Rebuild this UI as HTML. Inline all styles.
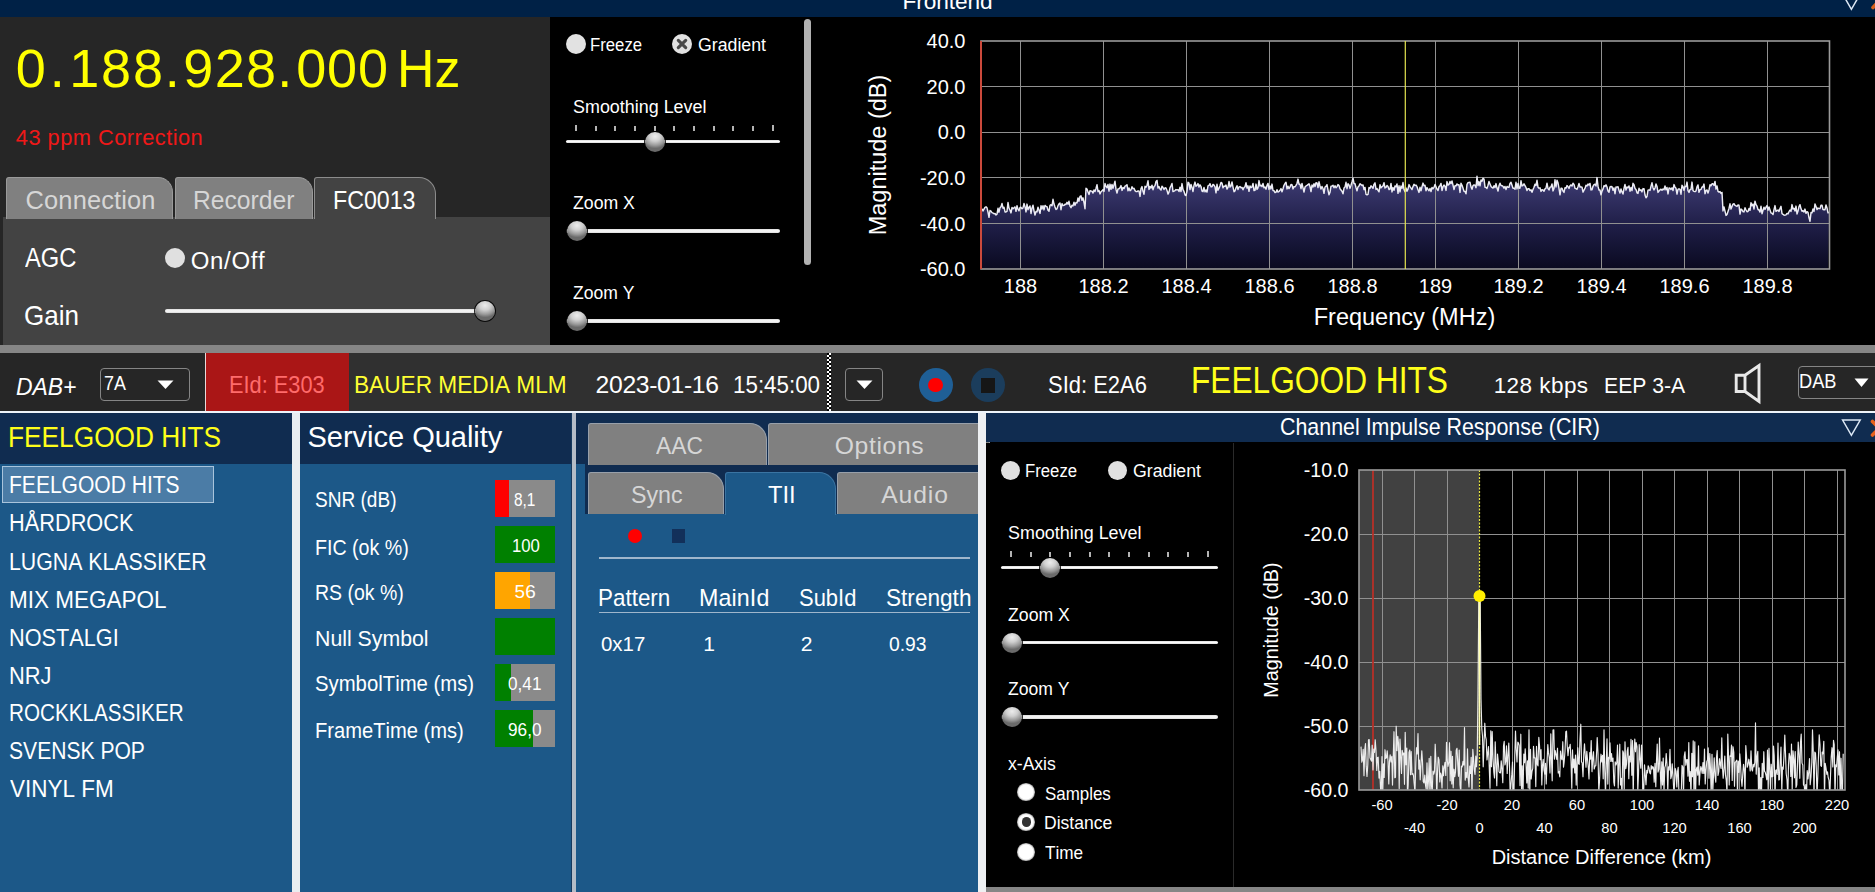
<!DOCTYPE html>
<html lang="en"><head><meta charset="utf-8"><title>QIRX</title>
<style>
html,body{margin:0;padding:0;background:#000;}
body{width:1875px;height:892px;position:relative;overflow:hidden;font-family:"Liberation Sans", sans-serif;}
.b{position:absolute;display:block}
.t{position:absolute;white-space:pre;font-kerning:none;font-family:"Liberation Sans", sans-serif;}
</style></head><body>
<div class="b" style="left:0px;top:0px;width:1875px;height:17px;background:#002146;"></div>
<div class="t" style="left:902.49px;top:-12.46px;font-size:22.67px;line-height:27px;letter-spacing:-0.090px;color:#fff;">Frontend</div>
<div class="b" style="left:0px;top:17px;width:550px;height:328px;background:#262626;"></div>
<div class="t" style="left:15.74px;top:36.18px;font-size:54.00px;line-height:65px;letter-spacing:4.005px;color:#ffff00;">0.</div>
<div class="t" style="left:69.24px;top:36.18px;font-size:54.00px;line-height:65px;letter-spacing:1.815px;color:#ffff00;">188.</div>
<div class="t" style="left:183.32px;top:36.18px;font-size:54.00px;line-height:65px;letter-spacing:1.287px;color:#ffff00;">928.</div>
<div class="t" style="left:296.24px;top:36.18px;font-size:54.00px;line-height:65px;letter-spacing:0.811px;color:#ffff00;">000</div>
<div class="t" style="left:396.60px;top:36.18px;font-size:54.00px;line-height:65px;letter-spacing:0.000px;color:#ffff00;transform:scaleX(0.9596);transform-origin:0 0;">Hz</div>
<div class="t" style="left:15.85px;top:124.84px;font-size:21.80px;line-height:26px;letter-spacing:0.473px;color:#f01818;">43 ppm Correction</div>
<div class="b" style="left:3px;top:217px;width:547px;height:128px;background:#434343;"></div>
<div class="b" style="left:6px;top:177px;width:166.5px;height:42px;background:#808080;border:1px solid #9a9a9a;border-bottom:none;border-radius:3px 15px 0 0;box-sizing:border-box"></div>
<div class="b" style="left:174.5px;top:177px;width:138px;height:42px;background:#808080;border:1px solid #9a9a9a;border-bottom:none;border-radius:3px 15px 0 0;box-sizing:border-box"></div>
<div class="b" style="left:314px;top:177px;width:122px;height:42px;background:#434343;border:1px solid #8c8c8c;border-bottom:none;border-radius:3px 17px 0 0;box-sizing:border-box"></div>
<div class="t" style="left:25.56px;top:184.58px;font-size:25.44px;line-height:31px;letter-spacing:0.140px;color:#d6d6d6;">Connection</div>
<div class="t" style="left:192.83px;top:184.58px;font-size:25.44px;line-height:31px;letter-spacing:0.000px;color:#d6d6d6;transform:scaleX(0.9696);transform-origin:0 0;">Recorder</div>
<div class="t" style="left:333.35px;top:184.78px;font-size:25.44px;line-height:31px;letter-spacing:0.000px;color:#fff;transform:scaleX(0.9119);transform-origin:0 0;">FC0013</div>
<div class="t" style="left:24.80px;top:241.33px;font-size:27.62px;line-height:33px;letter-spacing:0.000px;color:#fff;transform:scaleX(0.8597);transform-origin:0 0;">AGC</div>
<div class="t" style="left:23.54px;top:300.08px;font-size:26.89px;line-height:32px;letter-spacing:0.000px;color:#fff;transform:scaleX(0.9683);transform-origin:0 0;">Gain</div>
<div class="b" style="left:165px;top:247.5px;width:20px;height:20px;border-radius:50%;background:#e0e0e0;"></div>
<div class="t" style="left:190.71px;top:246.09px;font-size:23.98px;line-height:29px;letter-spacing:0.693px;color:#fff;">On/Off</div>
<div class="b" style="left:165px;top:309.45px;width:317px;height:3.1px;background:linear-gradient(180deg,#dcdcdc,#fafafa 50%,#dcdcdc);border-radius:2px;"></div>
<div class="b" style="left:474.5px;top:301.4px;width:20px;height:20px;border-radius:50%;background:radial-gradient(ellipse 70% 60% at 50% 22%, #ececec 0%, #cfcfcf 40%, #9a9a9a 75%, #6a6a6a 100%);box-shadow:0 0 0 1px rgba(0,0,0,.85);"></div>
<div class="b" style="left:566px;top:33.9px;width:20px;height:20px;border-radius:50%;background:#e2e2e2;"></div>
<div class="t" style="left:590.48px;top:33.35px;font-size:18.90px;line-height:23px;letter-spacing:0.000px;color:#fff;transform:scaleX(0.8862);transform-origin:0 0;">Freeze</div>
<div class="b" style="left:672.1px;top:33.9px;width:20px;height:20px;border-radius:50%;background:#e2e2e2;"></div>
<svg class="b" style="left:672.1px;top:33.9px" width="20" height="20" viewBox="0 0 20 20"><path d="M6.3 6.3 L13.7 13.7 M13.7 6.3 L6.3 13.7" stroke="#4a4a4a" stroke-width="3.1" stroke-linecap="round" fill="none"/></svg>
<div class="t" style="left:697.96px;top:33.35px;font-size:18.90px;line-height:23px;letter-spacing:0.000px;color:#fff;transform:scaleX(0.9386);transform-origin:0 0;">Gradient</div>
<div class="t" style="left:573.04px;top:95.35px;font-size:18.90px;line-height:23px;letter-spacing:0.000px;color:#fff;transform:scaleX(0.9485);transform-origin:0 0;">Smoothing Level</div>
<div class="b" style="left:575.05px;top:125px;width:1.9px;height:6px;background:#b4b4b4;"></div>
<div class="b" style="left:594.73px;top:126px;width:1.9px;height:5px;background:#b4b4b4;"></div>
<div class="b" style="left:614.41px;top:126px;width:1.9px;height:5px;background:#b4b4b4;"></div>
<div class="b" style="left:634.09px;top:126px;width:1.9px;height:5px;background:#b4b4b4;"></div>
<div class="b" style="left:653.77px;top:126px;width:1.9px;height:5px;background:#b4b4b4;"></div>
<div class="b" style="left:673.45px;top:126px;width:1.9px;height:5px;background:#b4b4b4;"></div>
<div class="b" style="left:693.13px;top:126px;width:1.9px;height:5px;background:#b4b4b4;"></div>
<div class="b" style="left:712.81px;top:126px;width:1.9px;height:5px;background:#b4b4b4;"></div>
<div class="b" style="left:732.49px;top:126px;width:1.9px;height:5px;background:#b4b4b4;"></div>
<div class="b" style="left:752.17px;top:126px;width:1.9px;height:5px;background:#b4b4b4;"></div>
<div class="b" style="left:771.85px;top:125px;width:1.9px;height:6px;background:#b4b4b4;"></div>
<div class="b" style="left:566px;top:139.95px;width:213.5px;height:3.1px;background:linear-gradient(180deg,#dcdcdc,#fafafa 50%,#dcdcdc);border-radius:2px;"></div>
<div class="b" style="left:644.6px;top:131.9px;width:20px;height:20px;border-radius:50%;background:radial-gradient(ellipse 70% 60% at 50% 22%, #ececec 0%, #cfcfcf 40%, #9a9a9a 75%, #6a6a6a 100%);box-shadow:0 0 0 1px rgba(0,0,0,.85);"></div>
<div class="t" style="left:573.29px;top:191.35px;font-size:18.90px;line-height:23px;letter-spacing:0.000px;color:#fff;transform:scaleX(0.9362);transform-origin:0 0;">Zoom X</div>
<div class="b" style="left:566px;top:229.45px;width:213.5px;height:3.1px;background:linear-gradient(180deg,#dcdcdc,#fafafa 50%,#dcdcdc);border-radius:2px;"></div>
<div class="b" style="left:566.5px;top:221.4px;width:20px;height:20px;border-radius:50%;background:radial-gradient(ellipse 70% 60% at 50% 22%, #ececec 0%, #cfcfcf 40%, #9a9a9a 75%, #6a6a6a 100%);box-shadow:0 0 0 1px rgba(0,0,0,.85);"></div>
<div class="t" style="left:573.29px;top:281.35px;font-size:18.90px;line-height:23px;letter-spacing:0.000px;color:#fff;transform:scaleX(0.9288);transform-origin:0 0;">Zoom Y</div>
<div class="b" style="left:566px;top:319.45px;width:213.5px;height:3.1px;background:linear-gradient(180deg,#dcdcdc,#fafafa 50%,#dcdcdc);border-radius:2px;"></div>
<div class="b" style="left:566.5px;top:311.4px;width:20px;height:20px;border-radius:50%;background:radial-gradient(ellipse 70% 60% at 50% 22%, #ececec 0%, #cfcfcf 40%, #9a9a9a 75%, #6a6a6a 100%);box-shadow:0 0 0 1px rgba(0,0,0,.85);"></div>
<div class="b" style="left:804px;top:19px;width:7px;height:246px;background:#b2b2b2;border-radius:4px;"></div>
<div class="b" style="left:0px;top:345px;width:1875px;height:7.5px;background:#868686;"></div>
<div class="b" style="left:0px;top:352.5px;width:1875px;height:59px;background:#262626;"></div>
<div class="b" style="left:206px;top:352.5px;width:143px;height:59px;background:#aa1616;"></div>
<div class="b" style="left:205px;top:352.5px;width:1px;height:59px;background:#e8d8d8;"></div>
<div class="b" style="left:349px;top:352.5px;width:478.3px;height:59px;background:#303030;"></div>
<div class="b" style="left:827.3px;top:352.5px;width:4px;height:59px;background:repeating-conic-gradient(#fff 0% 25%, #000 0% 50%) 0 0/4px 4px"></div>
<div class="b" style="left:0px;top:411px;width:1875px;height:2px;background:#eef4fa;"></div>
<div class="t" style="left:15.75px;top:372.59px;font-size:23.69px;line-height:28px;letter-spacing:0.000px;color:#fff;font-style:italic;transform:scaleX(0.9672);transform-origin:0 0;">DAB+</div>
<div class="b" style="left:100px;top:368px;width:90px;height:33px;border:1px solid #858585;border-radius:4px;box-sizing:border-box"></div>
<div class="t" style="left:103.93px;top:371.35px;font-size:20.35px;line-height:24px;letter-spacing:0.000px;color:#fff;transform:scaleX(0.8821);transform-origin:0 0;">7A</div>
<svg class="b" style="left:157px;top:379.5px" width="17" height="10" viewBox="0 0 17 10"><path d="M0.5 0.5 H16.5 L8.5 9 Z" fill="#fff"/></svg>
<div class="t" style="left:229.06px;top:369.83px;font-size:24.71px;line-height:30px;letter-spacing:0.000px;color:#ff6b6b;transform:scaleX(0.8822);transform-origin:0 0;">EId: E303</div>
<div class="t" style="left:353.99px;top:369.83px;font-size:24.71px;line-height:30px;letter-spacing:0.000px;color:#ffff33;transform:scaleX(0.9168);transform-origin:0 0;">BAUER MEDIA MLM</div>
<div class="t" style="left:595.61px;top:369.83px;font-size:24.71px;line-height:30px;letter-spacing:-0.341px;color:#fff;">2023-01-16</div>
<div class="t" style="left:733.15px;top:369.83px;font-size:24.71px;line-height:30px;letter-spacing:0.000px;color:#fff;transform:scaleX(0.9053);transform-origin:0 0;">15:45:00</div>
<div class="b" style="left:845px;top:368px;width:38px;height:33px;border:1px solid #858585;border-radius:4px;box-sizing:border-box"></div>
<svg class="b" style="left:855.5px;top:379.5px" width="17" height="10" viewBox="0 0 17 10"><path d="M0.5 0.5 H16.5 L8.5 9 Z" fill="#fff"/></svg>
<div class="b" style="left:918.5px;top:368px;width:34px;height:34px;border-radius:50%;background:#1f5f96;"></div>
<div class="b" style="left:928.25px;top:377.75px;width:14.5px;height:14.5px;border-radius:50%;background:#ff0000;"></div>
<div class="b" style="left:971px;top:368px;width:34px;height:34px;border-radius:50%;background:#1b3d5c;"></div>
<div class="b" style="left:981px;top:377.5px;width:14px;height:15px;background:#161616;"></div>
<div class="t" style="left:1047.85px;top:371.34px;font-size:23.26px;line-height:28px;letter-spacing:0.000px;color:#fff;transform:scaleX(0.9450);transform-origin:0 0;">SId: E2A6</div>
<div class="t" style="left:1191.25px;top:357.80px;font-size:37.79px;line-height:45px;letter-spacing:0.000px;color:#ffff1a;transform:scaleX(0.8385);transform-origin:0 0;">FEELGOOD HITS</div>
<div class="t" style="left:1493.63px;top:372.09px;font-size:22.53px;line-height:27px;letter-spacing:0.442px;color:#fff;">128 kbps</div>
<div class="t" style="left:1603.61px;top:372.09px;font-size:22.53px;line-height:27px;letter-spacing:0.000px;color:#fff;transform:scaleX(0.9407);transform-origin:0 0;">EEP 3-A</div>
<svg class="b" style="left:1730px;top:360px" width="36" height="48" viewBox="1730 360 36 48"><path d="M1736.2 375.2 H1745 L1759 365.5 V401.5 L1745 391.5 H1736.2 Z M1745 375.2 V391.5" stroke="#e8e8e8" stroke-width="2.9" fill="none" stroke-linejoin="miter"/></svg>
<div class="b" style="left:1797.5px;top:366px;width:90px;height:33px;border:1px solid #858585;border-radius:4px;box-sizing:border-box"></div>
<div class="t" style="left:1799.36px;top:369.10px;font-size:19.62px;line-height:24px;letter-spacing:0.000px;color:#fff;transform:scaleX(0.9283);transform-origin:0 0;">DAB</div>
<svg class="b" style="left:1854px;top:377.5px" width="15" height="10" viewBox="0 0 15 10"><path d="M0.5 0.5 H14.5 L7.5 9 Z" fill="#fff"/></svg>
<div class="b" style="left:0px;top:412.7px;width:292px;height:51.3px;background:#102c50;"></div>
<div class="b" style="left:0px;top:464px;width:292px;height:428px;background:#1c5888;"></div>
<div class="b" style="left:292px;top:412.7px;width:8px;height:479.3px;background:#e9edf0;"></div>
<div class="t" style="left:8.29px;top:419.17px;font-size:29.51px;line-height:35px;letter-spacing:0.000px;color:#ffff1a;transform:scaleX(0.8905);transform-origin:0 0;">FEELGOOD HITS</div>
<div class="b" style="left:2px;top:466px;width:212px;height:36.5px;background:#4b7ca6;border:1px solid #a9c4dc;box-sizing:border-box"></div>
<div class="t" style="left:9.12px;top:471.34px;font-size:23.26px;line-height:28px;letter-spacing:0.000px;color:#fff;transform:scaleX(0.9048);transform-origin:0 0;">FEELGOOD HITS</div>
<div class="t" style="left:9.06px;top:509.34px;font-size:23.26px;line-height:28px;letter-spacing:0.000px;color:#fff;transform:scaleX(0.9357);transform-origin:0 0;">HÅRDROCK</div>
<div class="t" style="left:9.10px;top:547.84px;font-size:23.26px;line-height:28px;letter-spacing:0.000px;color:#fff;transform:scaleX(0.9161);transform-origin:0 0;">LUGNA KLASSIKER</div>
<div class="t" style="left:9.00px;top:585.84px;font-size:23.26px;line-height:28px;letter-spacing:0.000px;color:#fff;transform:scaleX(0.9679);transform-origin:0 0;">MIX MEGAPOL</div>
<div class="t" style="left:9.07px;top:623.84px;font-size:23.26px;line-height:28px;letter-spacing:0.000px;color:#fff;transform:scaleX(0.9336);transform-origin:0 0;">NOSTALGI</div>
<div class="t" style="left:9.06px;top:661.84px;font-size:23.26px;line-height:28px;letter-spacing:0.000px;color:#fff;transform:scaleX(0.9379);transform-origin:0 0;">NRJ</div>
<div class="t" style="left:9.15px;top:699.34px;font-size:23.26px;line-height:28px;letter-spacing:0.000px;color:#fff;transform:scaleX(0.8891);transform-origin:0 0;">ROCKKLASSIKER</div>
<div class="t" style="left:9.49px;top:737.34px;font-size:23.26px;line-height:28px;letter-spacing:0.000px;color:#fff;transform:scaleX(0.9069);transform-origin:0 0;">SVENSK POP</div>
<div class="t" style="left:9.95px;top:775.34px;font-size:23.26px;line-height:28px;letter-spacing:0.000px;color:#fff;transform:scaleX(0.9673);transform-origin:0 0;">VINYL FM</div>
<div class="b" style="left:300px;top:412.7px;width:271px;height:51.3px;background:#102c50;"></div>
<div class="b" style="left:300px;top:464px;width:271px;height:428px;background:#1c5888;"></div>
<div class="b" style="left:570.5px;top:412.7px;width:1.5px;height:479.3px;background:#173a5e;"></div>
<div class="b" style="left:572px;top:412.7px;width:4px;height:479.3px;background:#b4bcc6;"></div>
<div class="t" style="left:307.53px;top:419.82px;font-size:29.07px;line-height:35px;letter-spacing:-0.044px;color:#fff;">Service Quality</div>
<div class="t" style="left:315.48px;top:486.09px;font-size:22.53px;line-height:27px;letter-spacing:0.000px;color:#fff;transform:scaleX(0.8460);transform-origin:0 0;">SNR (dB)</div>
<div class="t" style="left:314.74px;top:533.59px;font-size:22.53px;line-height:27px;letter-spacing:0.000px;color:#fff;transform:scaleX(0.8717);transform-origin:0 0;">FIC (ok %)</div>
<div class="t" style="left:314.75px;top:579.09px;font-size:22.53px;line-height:27px;letter-spacing:0.000px;color:#fff;transform:scaleX(0.8652);transform-origin:0 0;">RS (ok %)</div>
<div class="t" style="left:314.60px;top:624.59px;font-size:22.53px;line-height:27px;letter-spacing:0.000px;color:#fff;transform:scaleX(0.9457);transform-origin:0 0;">Null Symbol</div>
<div class="t" style="left:315.43px;top:670.09px;font-size:22.53px;line-height:27px;letter-spacing:0.000px;color:#fff;transform:scaleX(0.9020);transform-origin:0 0;">SymbolTime (ms)</div>
<div class="t" style="left:314.70px;top:716.59px;font-size:22.53px;line-height:27px;letter-spacing:0.000px;color:#fff;transform:scaleX(0.8946);transform-origin:0 0;">FrameTime (ms)</div>
<div class="b" style="left:495px;top:480px;width:60px;height:37px;background:#8a8a8a;"></div>
<div class="b" style="left:495px;top:480px;width:14px;height:37px;background:#ff0000;"></div>
<div class="t" style="left:514.18px;top:488.35px;font-size:18.90px;line-height:23px;letter-spacing:0.000px;color:#fff;transform:scaleX(0.8155);transform-origin:0 0;">8,1</div>
<div class="b" style="left:495px;top:526px;width:60px;height:37px;background:#8a8a8a;"></div>
<div class="b" style="left:495px;top:526px;width:60px;height:37px;background:#008000;"></div>
<div class="t" style="left:511.57px;top:534.35px;font-size:18.90px;line-height:23px;letter-spacing:0.000px;color:#fff;transform:scaleX(0.8859);transform-origin:0 0;">100</div>
<div class="b" style="left:495px;top:572px;width:60px;height:37px;background:#8a8a8a;"></div>
<div class="b" style="left:495px;top:572px;width:34.5px;height:37px;background:#ffa500;"></div>
<div class="t" style="left:514.59px;top:580.35px;font-size:18.90px;line-height:23px;letter-spacing:0.069px;color:#fff;">56</div>
<div class="b" style="left:495px;top:618px;width:60px;height:37px;background:#8a8a8a;"></div>
<div class="b" style="left:495px;top:618px;width:60px;height:37px;background:#008000;"></div>
<div class="b" style="left:495px;top:664px;width:60px;height:37px;background:#8a8a8a;"></div>
<div class="b" style="left:495px;top:664px;width:16px;height:37px;background:#008000;"></div>
<div class="t" style="left:508.18px;top:672.35px;font-size:18.90px;line-height:23px;letter-spacing:0.000px;color:#fff;transform:scaleX(0.9113);transform-origin:0 0;">0,41</div>
<div class="b" style="left:495px;top:710px;width:60px;height:37px;background:#8a8a8a;"></div>
<div class="b" style="left:495px;top:710px;width:37.5px;height:37px;background:#008000;"></div>
<div class="t" style="left:508.04px;top:718.35px;font-size:18.90px;line-height:23px;letter-spacing:0.000px;color:#fff;transform:scaleX(0.9103);transform-origin:0 0;">96,0</div>
<div class="b" style="left:576px;top:412.7px;width:402px;height:479.3px;background:#1c5888;"></div>
<div class="b" style="left:576px;top:412.7px;width:402px;height:101.3px;background:#102c50;"></div>
<div class="b" style="left:576px;top:464px;width:9px;height:50px;background:#1c5888;"></div>
<div class="b" style="left:588px;top:423.2px;width:179px;height:41.6px;background:#808080;border:1px solid #98a0aa;border-bottom:none;border-radius:3px 17px 0 0;box-sizing:border-box"></div>
<div class="b" style="left:768.3px;top:423.2px;width:221.7px;height:41.6px;background:#808080;border:1px solid #98a0aa;border-bottom:none;border-radius:3px 0px 0 0;box-sizing:border-box"></div>
<div class="b" style="left:588px;top:472px;width:136.3px;height:42px;background:#808080;border:1px solid #98a0aa;border-bottom:none;border-radius:3px 17px 0 0;box-sizing:border-box"></div>
<div class="b" style="left:837px;top:472px;width:153px;height:42px;background:#808080;border:1px solid #98a0aa;border-bottom:none;border-radius:3px 0px 0 0;box-sizing:border-box"></div>
<div class="b" style="left:725px;top:472px;width:111px;height:43px;background:#1c5888;border:1px solid #3a74a2;border-bottom:none;border-radius:3px 17px 0 0;box-sizing:border-box"></div>
<div class="t" style="left:655.81px;top:431.33px;font-size:24.71px;line-height:30px;letter-spacing:0.000px;color:#d6d6d6;transform:scaleX(0.9234);transform-origin:0 0;">AAC</div>
<div class="t" style="left:834.68px;top:431.33px;font-size:24.71px;line-height:30px;letter-spacing:0.651px;color:#d6d6d6;">Options</div>
<div class="t" style="left:630.79px;top:479.83px;font-size:24.71px;line-height:30px;letter-spacing:0.000px;color:#d6d6d6;transform:scaleX(0.9406);transform-origin:0 0;">Sync</div>
<div class="t" style="left:768.32px;top:480.33px;font-size:24.71px;line-height:30px;letter-spacing:0.000px;color:#fff;transform:scaleX(0.9620);transform-origin:0 0;">TII</div>
<div class="t" style="left:881.30px;top:480.33px;font-size:24.71px;line-height:30px;letter-spacing:0.847px;color:#d6d6d6;">Audio</div>
<div class="b" style="left:628px;top:528.5px;width:14px;height:14px;border-radius:50%;background:#ff0000;"></div>
<div class="b" style="left:672px;top:529px;width:13px;height:14px;background:#12305a;"></div>
<div class="b" style="left:599px;top:557.3px;width:371px;height:1.4px;background:#9fb6cc;"></div>
<div class="t" style="left:598.01px;top:584.34px;font-size:23.26px;line-height:28px;letter-spacing:0.000px;color:#fff;transform:scaleX(0.9642);transform-origin:0 0;">Pattern</div>
<div class="t" style="left:698.94px;top:584.34px;font-size:23.26px;line-height:28px;letter-spacing:0.121px;color:#fff;">MainId</div>
<div class="t" style="left:798.85px;top:584.34px;font-size:23.26px;line-height:28px;letter-spacing:0.000px;color:#fff;transform:scaleX(0.9447);transform-origin:0 0;">SubId</div>
<div class="t" style="left:885.82px;top:584.34px;font-size:23.26px;line-height:28px;letter-spacing:0.000px;color:#fff;transform:scaleX(0.9725);transform-origin:0 0;">Strength</div>
<div class="b" style="left:599px;top:612px;width:371px;height:1.2px;background:#9fb6cc;"></div>
<div class="t" style="left:601.05px;top:630.59px;font-size:21.08px;line-height:25px;letter-spacing:0.000px;color:#fff;transform:scaleX(0.9699);transform-origin:0 0;">0x17</div>
<div class="t" style="left:703.24px;top:630.59px;font-size:21.08px;line-height:25px;letter-spacing:0.000px;color:#fff;">1</div>
<div class="t" style="left:800.79px;top:630.59px;font-size:21.08px;line-height:25px;letter-spacing:0.000px;color:#fff;">2</div>
<div class="t" style="left:889.10px;top:630.59px;font-size:21.08px;line-height:25px;letter-spacing:0.000px;color:#fff;transform:scaleX(0.9167);transform-origin:0 0;">0.93</div>
<div class="b" style="left:978px;top:412.7px;width:7.5px;height:479.3px;background:#eef0f2;"></div>
<div class="b" style="left:985.5px;top:412.7px;width:889.5px;height:29.8px;background:#102c50;"></div>
<div class="b" style="left:985.5px;top:442.5px;width:889.5px;height:444.5px;background:#000;"></div>
<div class="b" style="left:985.5px;top:887px;width:889.5px;height:5px;background:#868686;"></div>
<div class="b" style="left:1233px;top:442.5px;width:1px;height:444.5px;background:#2a2a2a;"></div>
<div class="t" style="left:1280.26px;top:413.34px;font-size:23.26px;line-height:28px;letter-spacing:0.000px;color:#fff;transform:scaleX(0.9201);transform-origin:0 0;">Channel Impulse Response (CIR)</div>
<div class="b" style="left:1001px;top:460.5px;width:19px;height:19px;border-radius:50%;background:#e0e0e0;"></div>
<div class="t" style="left:1025.48px;top:459.35px;font-size:18.90px;line-height:23px;letter-spacing:0.000px;color:#fff;transform:scaleX(0.8862);transform-origin:0 0;">Freeze</div>
<div class="b" style="left:1107.5px;top:460.5px;width:19px;height:19px;border-radius:50%;background:#e0e0e0;"></div>
<div class="t" style="left:1132.96px;top:459.35px;font-size:18.90px;line-height:23px;letter-spacing:0.000px;color:#fff;transform:scaleX(0.9386);transform-origin:0 0;">Gradient</div>
<div class="t" style="left:1008.04px;top:521.35px;font-size:18.90px;line-height:23px;letter-spacing:0.000px;color:#fff;transform:scaleX(0.9485);transform-origin:0 0;">Smoothing Level</div>
<div class="b" style="left:1010.05px;top:551px;width:1.9px;height:6px;background:#b4b4b4;"></div>
<div class="b" style="left:1029.73px;top:552px;width:1.9px;height:5px;background:#b4b4b4;"></div>
<div class="b" style="left:1049.41px;top:552px;width:1.9px;height:5px;background:#b4b4b4;"></div>
<div class="b" style="left:1069.09px;top:552px;width:1.9px;height:5px;background:#b4b4b4;"></div>
<div class="b" style="left:1088.77px;top:552px;width:1.9px;height:5px;background:#b4b4b4;"></div>
<div class="b" style="left:1108.45px;top:552px;width:1.9px;height:5px;background:#b4b4b4;"></div>
<div class="b" style="left:1128.13px;top:552px;width:1.9px;height:5px;background:#b4b4b4;"></div>
<div class="b" style="left:1147.81px;top:552px;width:1.9px;height:5px;background:#b4b4b4;"></div>
<div class="b" style="left:1167.49px;top:552px;width:1.9px;height:5px;background:#b4b4b4;"></div>
<div class="b" style="left:1187.17px;top:552px;width:1.9px;height:5px;background:#b4b4b4;"></div>
<div class="b" style="left:1206.85px;top:551px;width:1.9px;height:6px;background:#b4b4b4;"></div>
<div class="b" style="left:1001px;top:565.95px;width:216.5px;height:3.1px;background:linear-gradient(180deg,#dcdcdc,#fafafa 50%,#dcdcdc);border-radius:2px;"></div>
<div class="b" style="left:1040px;top:557.9px;width:20px;height:20px;border-radius:50%;background:radial-gradient(ellipse 70% 60% at 50% 22%, #ececec 0%, #cfcfcf 40%, #9a9a9a 75%, #6a6a6a 100%);box-shadow:0 0 0 1px rgba(0,0,0,.85);"></div>
<div class="t" style="left:1008.29px;top:602.85px;font-size:18.90px;line-height:23px;letter-spacing:0.000px;color:#fff;transform:scaleX(0.9362);transform-origin:0 0;">Zoom X</div>
<div class="b" style="left:1001px;top:640.95px;width:216.5px;height:3.1px;background:linear-gradient(180deg,#dcdcdc,#fafafa 50%,#dcdcdc);border-radius:2px;"></div>
<div class="b" style="left:1002px;top:632.9px;width:20px;height:20px;border-radius:50%;background:radial-gradient(ellipse 70% 60% at 50% 22%, #ececec 0%, #cfcfcf 40%, #9a9a9a 75%, #6a6a6a 100%);box-shadow:0 0 0 1px rgba(0,0,0,.85);"></div>
<div class="t" style="left:1008.29px;top:677.35px;font-size:18.90px;line-height:23px;letter-spacing:0.000px;color:#fff;transform:scaleX(0.9288);transform-origin:0 0;">Zoom Y</div>
<div class="b" style="left:1001px;top:715.45px;width:216.5px;height:3.1px;background:linear-gradient(180deg,#dcdcdc,#fafafa 50%,#dcdcdc);border-radius:2px;"></div>
<div class="b" style="left:1002px;top:707.4px;width:20px;height:20px;border-radius:50%;background:radial-gradient(ellipse 70% 60% at 50% 22%, #ececec 0%, #cfcfcf 40%, #9a9a9a 75%, #6a6a6a 100%);box-shadow:0 0 0 1px rgba(0,0,0,.85);"></div>
<div class="t" style="left:1007.65px;top:753.10px;font-size:18.17px;line-height:22px;letter-spacing:0.000px;color:#fff;transform:scaleX(0.9671);transform-origin:0 0;">x-Axis</div>
<div class="b" style="left:1017.3px;top:783.2px;width:17.6px;height:17.6px;border-radius:50%;background:radial-gradient(circle closest-side,#fff 0,#fff 78%,#d8d8d8 90%,#8a8a8a 100%);"></div>
<div class="t" style="left:1044.58px;top:782.60px;font-size:18.17px;line-height:22px;letter-spacing:0.000px;color:#fff;transform:scaleX(0.9320);transform-origin:0 0;">Samples</div>
<div class="b" style="left:1017.3px;top:813.2px;width:17.6px;height:17.6px;border-radius:50%;background:radial-gradient(circle closest-side,#fff 0,#fff 78%,#d8d8d8 90%,#8a8a8a 100%);"></div>
<div class="b" style="left:1021.5px;top:817.4px;width:9.2px;height:9.2px;border-radius:50%;background:#333;"></div>
<div class="t" style="left:1043.91px;top:812.10px;font-size:18.17px;line-height:22px;letter-spacing:0.000px;color:#fff;transform:scaleX(0.9650);transform-origin:0 0;">Distance</div>
<div class="b" style="left:1017.3px;top:843.2px;width:17.6px;height:17.6px;border-radius:50%;background:radial-gradient(circle closest-side,#fff 0,#fff 78%,#d8d8d8 90%,#8a8a8a 100%);"></div>
<div class="t" style="left:1044.96px;top:842.10px;font-size:18.17px;line-height:22px;letter-spacing:0.000px;color:#fff;transform:scaleX(0.9449);transform-origin:0 0;">Time</div>
<svg class="b" style="left:0;top:0" width="1875" height="892" viewBox="0 0 1875 892" font-family='"Liberation Sans", sans-serif' fill="#fff">
<defs><linearGradient id="g1" gradientUnits="userSpaceOnUse" x1="0" y1="180" x2="0" y2="269"><stop offset="0" stop-color="#3d3b72"/><stop offset="0.55" stop-color="#1d1c44"/><stop offset="1" stop-color="#0a0a20"/></linearGradient><clipPath id="c2"><rect x="1359" y="470" width="486" height="320"/></clipPath></defs>
<polygon points="982,269 982,208.7 983,211.0 984,209.1 985,207.3 986,206.8 987,207.8 988,212.0 989,217.3 990,210.5 991,211.2 992,212.6 993,213.0 994,213.8 995,213.4 996,215.0 997,214.2 998,208.3 999,212.2 1000,207.8 1001,206.7 1002,203.5 1003,208.2 1004,207.2 1005,211.9 1006,211.9 1007,211.4 1008,202.5 1009,208.1 1010,210.3 1011,212.9 1012,207.5 1013,208.7 1014,207.7 1015,206.9 1016,211.3 1017,205.7 1018,209.2 1019,210.8 1020,207.5 1021,207.3 1022,208.8 1023,207.9 1024,203.5 1025,206.7 1026,211.9 1027,204.1 1028,209.7 1029,207.5 1030,205.9 1031,213.5 1032,208.0 1033,205.2 1034,210.8 1035,215.1 1036,211.5 1037,211.9 1038,207.2 1039,210.2 1040,213.4 1041,205.8 1042,209.0 1043,205.7 1044,209.9 1045,205.4 1046,206.3 1047,206.7 1048,210.3 1049,211.2 1050,205.3 1051,204.7 1052,205.8 1053,199.3 1054,204.1 1055,207.1 1056,209.5 1057,208.9 1058,205.6 1059,203.9 1060,203.0 1061,209.7 1062,203.7 1063,205.6 1064,205.4 1065,204.3 1066,204.5 1067,202.3 1068,204.3 1069,201.3 1070,206.1 1071,207.7 1072,205.3 1073,205.9 1074,202.3 1075,205.2 1076,202.6 1077,202.9 1078,198.0 1079,201.2 1080,196.3 1081,195.8 1082,200.3 1083,197.8 1084,202.5 1085,208.7 1086,188.3 1087,189.1 1088,191.9 1089,194.6 1090,190.7 1091,191.0 1092,191.1 1093,193.1 1094,190.0 1095,191.6 1096,188.4 1097,184.7 1098,191.6 1099,190.5 1100,193.9 1101,191.8 1102,190.9 1103,189.6 1104,191.4 1105,183.5 1106,186.4 1107,187.7 1108,184.5 1109,191.1 1110,184.1 1111,189.3 1112,184.5 1113,188.4 1114,184.9 1115,181.3 1116,189.4 1117,193.0 1118,189.0 1119,188.8 1120,187.7 1121,185.6 1122,190.4 1123,187.5 1124,188.6 1125,186.2 1126,185.6 1127,184.7 1128,190.8 1129,188.0 1130,190.7 1131,189.9 1132,186.7 1133,188.7 1134,188.3 1135,190.6 1136,191.5 1137,191.6 1138,190.9 1139,190.9 1140,196.4 1141,188.5 1142,186.6 1143,191.3 1144,194.2 1145,186.3 1146,187.2 1147,185.5 1148,180.8 1149,189.4 1150,186.5 1151,188.1 1152,185.2 1153,189.7 1154,186.5 1155,185.7 1156,181.5 1157,180.4 1158,188.1 1159,186.6 1160,189.0 1161,190.1 1162,186.3 1163,187.5 1164,189.5 1165,187.8 1166,187.9 1167,190.4 1168,194.1 1169,192.1 1170,187.9 1171,185.8 1172,183.5 1173,191.6 1174,191.2 1175,190.6 1176,189.6 1177,189.9 1178,189.7 1179,191.5 1180,187.2 1181,191.5 1182,183.6 1183,189.6 1184,191.4 1185,194.9 1186,195.6 1187,191.1 1188,182.3 1189,183.1 1190,189.6 1191,184.4 1192,187.4 1193,191.5 1194,185.4 1195,182.1 1196,186.3 1197,185.4 1198,183.6 1199,187.0 1200,184.8 1201,186.5 1202,191.2 1203,191.7 1204,187.5 1205,191.8 1206,190.0 1207,192.1 1208,185.9 1209,185.3 1210,183.7 1211,186.8 1212,186.8 1213,184.4 1214,185.1 1215,186.9 1216,192.8 1217,184.3 1218,190.3 1219,188.2 1220,185.7 1221,182.4 1222,183.1 1223,187.8 1224,186.2 1225,186.4 1226,185.0 1227,189.1 1228,187.4 1229,181.5 1230,187.1 1231,186.0 1232,181.9 1233,187.1 1234,191.7 1235,190.9 1236,187.8 1237,185.7 1238,189.5 1239,186.9 1240,186.6 1241,187.7 1242,187.4 1243,189.8 1244,187.5 1245,186.7 1246,182.7 1247,188.1 1248,185.8 1249,191.3 1250,186.0 1251,187.6 1252,187.0 1253,183.4 1254,190.6 1255,190.3 1256,184.1 1257,189.4 1258,187.8 1259,180.6 1260,186.0 1261,185.2 1262,186.7 1263,183.5 1264,187.8 1265,187.0 1266,189.2 1267,185.4 1268,183.4 1269,189.4 1270,186.0 1271,188.9 1272,184.1 1273,190.5 1274,190.7 1275,192.6 1276,192.3 1277,189.7 1278,192.1 1279,191.5 1280,190.1 1281,188.6 1282,191.8 1283,188.7 1284,185.3 1285,183.5 1286,182.2 1287,188.9 1288,186.3 1289,188.6 1290,186.9 1291,184.5 1292,184.8 1293,188.9 1294,186.6 1295,186.8 1296,185.4 1297,183.5 1298,179.1 1299,184.2 1300,184.3 1301,188.7 1302,183.5 1303,187.8 1304,192.0 1305,187.1 1306,186.0 1307,185.4 1308,184.6 1309,183.8 1310,186.5 1311,191.6 1312,185.0 1313,187.0 1314,183.7 1315,186.6 1316,182.7 1317,182.9 1318,187.6 1319,181.8 1320,186.0 1321,189.0 1322,186.5 1323,188.5 1324,193.3 1325,187.0 1326,186.4 1327,184.7 1328,190.1 1329,194.8 1330,192.3 1331,186.1 1332,186.1 1333,185.3 1334,187.8 1335,185.7 1336,187.8 1337,186.6 1338,184.6 1339,185.5 1340,188.8 1341,190.0 1342,191.2 1343,193.8 1344,188.1 1345,187.1 1346,182.3 1347,188.7 1348,183.8 1349,184.9 1350,188.4 1351,185.3 1352,181.9 1353,178.1 1354,183.5 1355,183.8 1356,187.5 1357,190.7 1358,186.9 1359,185.9 1360,183.7 1361,184.6 1362,185.6 1363,184.9 1364,189.6 1365,187.4 1366,194.3 1367,194.8 1368,194.3 1369,187.6 1370,188.3 1371,185.8 1372,186.9 1373,188.3 1374,184.3 1375,182.8 1376,189.4 1377,188.5 1378,190.4 1379,191.8 1380,184.8 1381,187.9 1382,186.7 1383,186.0 1384,182.7 1385,188.0 1386,187.4 1387,185.5 1388,186.6 1389,189.5 1390,189.2 1391,183.4 1392,191.9 1393,187.6 1394,190.3 1395,186.0 1396,186.8 1397,184.0 1398,193.3 1399,185.8 1400,191.9 1401,186.1 1402,188.3 1403,182.5 1404,189.4 1405,191.7 1406,188.0 1407,191.2 1408,189.1 1409,184.6 1410,186.6 1411,188.2 1412,189.6 1413,186.6 1414,184.3 1415,185.6 1416,185.0 1417,186.7 1418,189.8 1419,192.4 1420,187.3 1421,190.8 1422,186.8 1423,183.1 1424,185.7 1425,185.3 1426,190.7 1427,187.6 1428,189.4 1429,190.7 1430,188.5 1431,191.6 1432,187.4 1433,188.7 1434,187.4 1435,184.4 1436,186.8 1437,189.2 1438,190.6 1439,186.6 1440,185.7 1441,183.4 1442,190.5 1443,186.7 1444,185.0 1445,186.4 1446,190.4 1447,181.6 1448,185.1 1449,184.4 1450,181.5 1451,183.6 1452,181.0 1453,185.1 1454,189.5 1455,185.8 1456,185.9 1457,183.9 1458,185.0 1459,184.7 1460,192.4 1461,183.2 1462,185.3 1463,188.1 1464,191.3 1465,191.5 1466,193.8 1467,184.3 1468,182.7 1469,182.4 1470,182.3 1471,186.9 1472,189.3 1473,185.6 1474,184.9 1475,185.2 1476,187.7 1477,176.3 1478,185.6 1479,181.6 1480,185.8 1481,180.0 1482,181.3 1483,178.2 1484,179.1 1485,187.2 1486,187.4 1487,188.4 1488,185.2 1489,181.5 1490,184.0 1491,186.4 1492,187.4 1493,188.1 1494,185.7 1495,187.6 1496,183.6 1497,188.1 1498,191.1 1499,185.8 1500,183.2 1501,185.5 1502,185.7 1503,186.3 1504,188.2 1505,186.4 1506,189.6 1507,186.4 1508,187.2 1509,187.2 1510,183.4 1511,182.3 1512,185.3 1513,188.2 1514,188.3 1515,189.2 1516,182.3 1517,188.9 1518,183.4 1519,188.3 1520,188.1 1521,180.8 1522,186.0 1523,185.3 1524,183.8 1525,185.6 1526,187.5 1527,190.5 1528,188.6 1529,188.6 1530,190.6 1531,189.8 1532,192.3 1533,189.5 1534,187.3 1535,184.3 1536,185.5 1537,180.3 1538,187.2 1539,188.2 1540,187.8 1541,191.4 1542,189.7 1543,190.0 1544,191.3 1545,188.8 1546,188.2 1547,183.2 1548,188.6 1549,189.9 1550,187.2 1551,186.9 1552,183.9 1553,190.9 1554,188.4 1555,179.8 1556,187.0 1557,180.3 1558,182.8 1559,188.3 1560,194.8 1561,188.3 1562,188.3 1563,191.1 1564,192.4 1565,187.7 1566,188.2 1567,185.6 1568,186.7 1569,188.4 1570,185.8 1571,184.9 1572,186.1 1573,183.2 1574,184.4 1575,188.3 1576,188.7 1577,189.3 1578,186.8 1579,183.5 1580,187.1 1581,186.9 1582,187.1 1583,192.1 1584,190.1 1585,188.4 1586,185.2 1587,186.0 1588,184.1 1589,185.0 1590,183.4 1591,189.9 1592,189.7 1593,186.3 1594,184.6 1595,184.2 1596,186.0 1597,177.6 1598,186.2 1599,190.1 1600,190.0 1601,194.8 1602,191.1 1603,189.1 1604,185.7 1605,186.4 1606,184.8 1607,187.0 1608,191.1 1609,192.3 1610,186.9 1611,186.5 1612,186.8 1613,190.3 1614,187.9 1615,193.7 1616,186.9 1617,187.1 1618,186.8 1619,190.2 1620,193.1 1621,188.9 1622,191.9 1623,194.0 1624,188.4 1625,184.5 1626,190.1 1627,187.0 1628,187.7 1629,185.9 1630,191.2 1631,187.4 1632,190.6 1633,183.3 1634,184.7 1635,188.4 1636,189.4 1637,192.8 1638,193.4 1639,188.3 1640,190.5 1641,189.7 1642,191.9 1643,188.6 1644,188.7 1645,195.0 1646,197.7 1647,196.5 1648,190.2 1649,189.9 1650,190.5 1651,186.2 1652,182.8 1653,187.7 1654,189.9 1655,188.0 1656,183.9 1657,186.4 1658,192.4 1659,191.0 1660,189.9 1661,189.2 1662,190.3 1663,189.0 1664,189.8 1665,185.9 1666,189.7 1667,187.5 1668,193.9 1669,188.0 1670,188.2 1671,189.5 1672,187.8 1673,190.6 1674,184.6 1675,187.1 1676,188.3 1677,194.0 1678,189.4 1679,188.8 1680,189.4 1681,194.2 1682,185.3 1683,186.7 1684,190.2 1685,186.5 1686,186.6 1687,182.1 1688,190.7 1689,192.4 1690,189.6 1691,189.3 1692,182.1 1693,190.7 1694,191.3 1695,191.7 1696,191.0 1697,186.8 1698,184.9 1699,192.3 1700,189.6 1701,189.4 1702,186.9 1703,187.1 1704,184.1 1705,193.7 1706,190.5 1707,189.9 1708,193.1 1709,189.9 1710,184.8 1711,185.7 1712,183.8 1713,183.8 1714,185.5 1715,181.4 1716,189.1 1717,185.9 1718,191.4 1719,192.1 1720,191.6 1721,193.5 1722,192.4 1723,210.9 1724,207.0 1725,211.2 1726,215.4 1727,214.4 1728,211.4 1729,208.4 1730,203.8 1731,209.0 1732,206.4 1733,204.1 1734,203.7 1735,205.4 1736,205.9 1737,206.4 1738,205.0 1739,205.3 1740,214.1 1741,209.0 1742,209.8 1743,211.8 1744,211.9 1745,207.8 1746,210.0 1747,211.7 1748,211.6 1749,208.4 1750,210.3 1751,202.7 1752,205.7 1753,204.1 1754,209.0 1755,201.2 1756,204.6 1757,206.2 1758,209.5 1759,210.0 1760,212.1 1761,206.2 1762,213.7 1763,210.2 1764,207.3 1765,209.4 1766,207.2 1767,205.5 1768,210.2 1769,206.9 1770,209.9 1771,212.9 1772,213.4 1773,214.6 1774,209.7 1775,205.6 1776,211.3 1777,210.6 1778,210.0 1779,211.5 1780,208.6 1781,206.3 1782,213.7 1783,214.3 1784,215.1 1785,215.2 1786,214.8 1787,213.4 1788,213.9 1789,211.7 1790,210.0 1791,211.4 1792,204.6 1793,209.0 1794,208.3 1795,211.0 1796,206.1 1797,214.0 1798,211.1 1799,206.6 1800,204.7 1801,208.8 1802,211.3 1803,210.6 1804,212.0 1805,209.1 1806,213.3 1807,211.7 1808,212.4 1809,217.8 1810,221.2 1811,212.6 1812,212.8 1813,208.9 1814,211.5 1815,203.9 1816,206.6 1817,209.5 1818,208.0 1819,208.6 1820,208.6 1821,205.1 1822,205.1 1823,209.6 1824,209.8 1825,209.7 1826,204.9 1827,208.0 1828,212.8 1829,212.5 1828,269" fill="url(#g1)"/>
<path d="M1020.5 41 V269 M1103.5 41 V269 M1186.5 41 V269 M1269.5 41 V269 M1352.5 41 V269 M1435.5 41 V269 M1518.5 41 V269 M1601.5 41 V269 M1684.5 41 V269 M1767.5 41 V269 M981 86.5 H1829.5 M981 132.5 H1829.5 M981 177.5 H1829.5 M981 223.5 H1829.5" stroke="#909090" stroke-width="1" fill="none"/>
<polyline points="982,208.7 983,211.0 984,209.1 985,207.3 986,206.8 987,207.8 988,212.0 989,217.3 990,210.5 991,211.2 992,212.6 993,213.0 994,213.8 995,213.4 996,215.0 997,214.2 998,208.3 999,212.2 1000,207.8 1001,206.7 1002,203.5 1003,208.2 1004,207.2 1005,211.9 1006,211.9 1007,211.4 1008,202.5 1009,208.1 1010,210.3 1011,212.9 1012,207.5 1013,208.7 1014,207.7 1015,206.9 1016,211.3 1017,205.7 1018,209.2 1019,210.8 1020,207.5 1021,207.3 1022,208.8 1023,207.9 1024,203.5 1025,206.7 1026,211.9 1027,204.1 1028,209.7 1029,207.5 1030,205.9 1031,213.5 1032,208.0 1033,205.2 1034,210.8 1035,215.1 1036,211.5 1037,211.9 1038,207.2 1039,210.2 1040,213.4 1041,205.8 1042,209.0 1043,205.7 1044,209.9 1045,205.4 1046,206.3 1047,206.7 1048,210.3 1049,211.2 1050,205.3 1051,204.7 1052,205.8 1053,199.3 1054,204.1 1055,207.1 1056,209.5 1057,208.9 1058,205.6 1059,203.9 1060,203.0 1061,209.7 1062,203.7 1063,205.6 1064,205.4 1065,204.3 1066,204.5 1067,202.3 1068,204.3 1069,201.3 1070,206.1 1071,207.7 1072,205.3 1073,205.9 1074,202.3 1075,205.2 1076,202.6 1077,202.9 1078,198.0 1079,201.2 1080,196.3 1081,195.8 1082,200.3 1083,197.8 1084,202.5 1085,208.7 1086,188.3 1087,189.1 1088,191.9 1089,194.6 1090,190.7 1091,191.0 1092,191.1 1093,193.1 1094,190.0 1095,191.6 1096,188.4 1097,184.7 1098,191.6 1099,190.5 1100,193.9 1101,191.8 1102,190.9 1103,189.6 1104,191.4 1105,183.5 1106,186.4 1107,187.7 1108,184.5 1109,191.1 1110,184.1 1111,189.3 1112,184.5 1113,188.4 1114,184.9 1115,181.3 1116,189.4 1117,193.0 1118,189.0 1119,188.8 1120,187.7 1121,185.6 1122,190.4 1123,187.5 1124,188.6 1125,186.2 1126,185.6 1127,184.7 1128,190.8 1129,188.0 1130,190.7 1131,189.9 1132,186.7 1133,188.7 1134,188.3 1135,190.6 1136,191.5 1137,191.6 1138,190.9 1139,190.9 1140,196.4 1141,188.5 1142,186.6 1143,191.3 1144,194.2 1145,186.3 1146,187.2 1147,185.5 1148,180.8 1149,189.4 1150,186.5 1151,188.1 1152,185.2 1153,189.7 1154,186.5 1155,185.7 1156,181.5 1157,180.4 1158,188.1 1159,186.6 1160,189.0 1161,190.1 1162,186.3 1163,187.5 1164,189.5 1165,187.8 1166,187.9 1167,190.4 1168,194.1 1169,192.1 1170,187.9 1171,185.8 1172,183.5 1173,191.6 1174,191.2 1175,190.6 1176,189.6 1177,189.9 1178,189.7 1179,191.5 1180,187.2 1181,191.5 1182,183.6 1183,189.6 1184,191.4 1185,194.9 1186,195.6 1187,191.1 1188,182.3 1189,183.1 1190,189.6 1191,184.4 1192,187.4 1193,191.5 1194,185.4 1195,182.1 1196,186.3 1197,185.4 1198,183.6 1199,187.0 1200,184.8 1201,186.5 1202,191.2 1203,191.7 1204,187.5 1205,191.8 1206,190.0 1207,192.1 1208,185.9 1209,185.3 1210,183.7 1211,186.8 1212,186.8 1213,184.4 1214,185.1 1215,186.9 1216,192.8 1217,184.3 1218,190.3 1219,188.2 1220,185.7 1221,182.4 1222,183.1 1223,187.8 1224,186.2 1225,186.4 1226,185.0 1227,189.1 1228,187.4 1229,181.5 1230,187.1 1231,186.0 1232,181.9 1233,187.1 1234,191.7 1235,190.9 1236,187.8 1237,185.7 1238,189.5 1239,186.9 1240,186.6 1241,187.7 1242,187.4 1243,189.8 1244,187.5 1245,186.7 1246,182.7 1247,188.1 1248,185.8 1249,191.3 1250,186.0 1251,187.6 1252,187.0 1253,183.4 1254,190.6 1255,190.3 1256,184.1 1257,189.4 1258,187.8 1259,180.6 1260,186.0 1261,185.2 1262,186.7 1263,183.5 1264,187.8 1265,187.0 1266,189.2 1267,185.4 1268,183.4 1269,189.4 1270,186.0 1271,188.9 1272,184.1 1273,190.5 1274,190.7 1275,192.6 1276,192.3 1277,189.7 1278,192.1 1279,191.5 1280,190.1 1281,188.6 1282,191.8 1283,188.7 1284,185.3 1285,183.5 1286,182.2 1287,188.9 1288,186.3 1289,188.6 1290,186.9 1291,184.5 1292,184.8 1293,188.9 1294,186.6 1295,186.8 1296,185.4 1297,183.5 1298,179.1 1299,184.2 1300,184.3 1301,188.7 1302,183.5 1303,187.8 1304,192.0 1305,187.1 1306,186.0 1307,185.4 1308,184.6 1309,183.8 1310,186.5 1311,191.6 1312,185.0 1313,187.0 1314,183.7 1315,186.6 1316,182.7 1317,182.9 1318,187.6 1319,181.8 1320,186.0 1321,189.0 1322,186.5 1323,188.5 1324,193.3 1325,187.0 1326,186.4 1327,184.7 1328,190.1 1329,194.8 1330,192.3 1331,186.1 1332,186.1 1333,185.3 1334,187.8 1335,185.7 1336,187.8 1337,186.6 1338,184.6 1339,185.5 1340,188.8 1341,190.0 1342,191.2 1343,193.8 1344,188.1 1345,187.1 1346,182.3 1347,188.7 1348,183.8 1349,184.9 1350,188.4 1351,185.3 1352,181.9 1353,178.1 1354,183.5 1355,183.8 1356,187.5 1357,190.7 1358,186.9 1359,185.9 1360,183.7 1361,184.6 1362,185.6 1363,184.9 1364,189.6 1365,187.4 1366,194.3 1367,194.8 1368,194.3 1369,187.6 1370,188.3 1371,185.8 1372,186.9 1373,188.3 1374,184.3 1375,182.8 1376,189.4 1377,188.5 1378,190.4 1379,191.8 1380,184.8 1381,187.9 1382,186.7 1383,186.0 1384,182.7 1385,188.0 1386,187.4 1387,185.5 1388,186.6 1389,189.5 1390,189.2 1391,183.4 1392,191.9 1393,187.6 1394,190.3 1395,186.0 1396,186.8 1397,184.0 1398,193.3 1399,185.8 1400,191.9 1401,186.1 1402,188.3 1403,182.5 1404,189.4 1405,191.7 1406,188.0 1407,191.2 1408,189.1 1409,184.6 1410,186.6 1411,188.2 1412,189.6 1413,186.6 1414,184.3 1415,185.6 1416,185.0 1417,186.7 1418,189.8 1419,192.4 1420,187.3 1421,190.8 1422,186.8 1423,183.1 1424,185.7 1425,185.3 1426,190.7 1427,187.6 1428,189.4 1429,190.7 1430,188.5 1431,191.6 1432,187.4 1433,188.7 1434,187.4 1435,184.4 1436,186.8 1437,189.2 1438,190.6 1439,186.6 1440,185.7 1441,183.4 1442,190.5 1443,186.7 1444,185.0 1445,186.4 1446,190.4 1447,181.6 1448,185.1 1449,184.4 1450,181.5 1451,183.6 1452,181.0 1453,185.1 1454,189.5 1455,185.8 1456,185.9 1457,183.9 1458,185.0 1459,184.7 1460,192.4 1461,183.2 1462,185.3 1463,188.1 1464,191.3 1465,191.5 1466,193.8 1467,184.3 1468,182.7 1469,182.4 1470,182.3 1471,186.9 1472,189.3 1473,185.6 1474,184.9 1475,185.2 1476,187.7 1477,176.3 1478,185.6 1479,181.6 1480,185.8 1481,180.0 1482,181.3 1483,178.2 1484,179.1 1485,187.2 1486,187.4 1487,188.4 1488,185.2 1489,181.5 1490,184.0 1491,186.4 1492,187.4 1493,188.1 1494,185.7 1495,187.6 1496,183.6 1497,188.1 1498,191.1 1499,185.8 1500,183.2 1501,185.5 1502,185.7 1503,186.3 1504,188.2 1505,186.4 1506,189.6 1507,186.4 1508,187.2 1509,187.2 1510,183.4 1511,182.3 1512,185.3 1513,188.2 1514,188.3 1515,189.2 1516,182.3 1517,188.9 1518,183.4 1519,188.3 1520,188.1 1521,180.8 1522,186.0 1523,185.3 1524,183.8 1525,185.6 1526,187.5 1527,190.5 1528,188.6 1529,188.6 1530,190.6 1531,189.8 1532,192.3 1533,189.5 1534,187.3 1535,184.3 1536,185.5 1537,180.3 1538,187.2 1539,188.2 1540,187.8 1541,191.4 1542,189.7 1543,190.0 1544,191.3 1545,188.8 1546,188.2 1547,183.2 1548,188.6 1549,189.9 1550,187.2 1551,186.9 1552,183.9 1553,190.9 1554,188.4 1555,179.8 1556,187.0 1557,180.3 1558,182.8 1559,188.3 1560,194.8 1561,188.3 1562,188.3 1563,191.1 1564,192.4 1565,187.7 1566,188.2 1567,185.6 1568,186.7 1569,188.4 1570,185.8 1571,184.9 1572,186.1 1573,183.2 1574,184.4 1575,188.3 1576,188.7 1577,189.3 1578,186.8 1579,183.5 1580,187.1 1581,186.9 1582,187.1 1583,192.1 1584,190.1 1585,188.4 1586,185.2 1587,186.0 1588,184.1 1589,185.0 1590,183.4 1591,189.9 1592,189.7 1593,186.3 1594,184.6 1595,184.2 1596,186.0 1597,177.6 1598,186.2 1599,190.1 1600,190.0 1601,194.8 1602,191.1 1603,189.1 1604,185.7 1605,186.4 1606,184.8 1607,187.0 1608,191.1 1609,192.3 1610,186.9 1611,186.5 1612,186.8 1613,190.3 1614,187.9 1615,193.7 1616,186.9 1617,187.1 1618,186.8 1619,190.2 1620,193.1 1621,188.9 1622,191.9 1623,194.0 1624,188.4 1625,184.5 1626,190.1 1627,187.0 1628,187.7 1629,185.9 1630,191.2 1631,187.4 1632,190.6 1633,183.3 1634,184.7 1635,188.4 1636,189.4 1637,192.8 1638,193.4 1639,188.3 1640,190.5 1641,189.7 1642,191.9 1643,188.6 1644,188.7 1645,195.0 1646,197.7 1647,196.5 1648,190.2 1649,189.9 1650,190.5 1651,186.2 1652,182.8 1653,187.7 1654,189.9 1655,188.0 1656,183.9 1657,186.4 1658,192.4 1659,191.0 1660,189.9 1661,189.2 1662,190.3 1663,189.0 1664,189.8 1665,185.9 1666,189.7 1667,187.5 1668,193.9 1669,188.0 1670,188.2 1671,189.5 1672,187.8 1673,190.6 1674,184.6 1675,187.1 1676,188.3 1677,194.0 1678,189.4 1679,188.8 1680,189.4 1681,194.2 1682,185.3 1683,186.7 1684,190.2 1685,186.5 1686,186.6 1687,182.1 1688,190.7 1689,192.4 1690,189.6 1691,189.3 1692,182.1 1693,190.7 1694,191.3 1695,191.7 1696,191.0 1697,186.8 1698,184.9 1699,192.3 1700,189.6 1701,189.4 1702,186.9 1703,187.1 1704,184.1 1705,193.7 1706,190.5 1707,189.9 1708,193.1 1709,189.9 1710,184.8 1711,185.7 1712,183.8 1713,183.8 1714,185.5 1715,181.4 1716,189.1 1717,185.9 1718,191.4 1719,192.1 1720,191.6 1721,193.5 1722,192.4 1723,210.9 1724,207.0 1725,211.2 1726,215.4 1727,214.4 1728,211.4 1729,208.4 1730,203.8 1731,209.0 1732,206.4 1733,204.1 1734,203.7 1735,205.4 1736,205.9 1737,206.4 1738,205.0 1739,205.3 1740,214.1 1741,209.0 1742,209.8 1743,211.8 1744,211.9 1745,207.8 1746,210.0 1747,211.7 1748,211.6 1749,208.4 1750,210.3 1751,202.7 1752,205.7 1753,204.1 1754,209.0 1755,201.2 1756,204.6 1757,206.2 1758,209.5 1759,210.0 1760,212.1 1761,206.2 1762,213.7 1763,210.2 1764,207.3 1765,209.4 1766,207.2 1767,205.5 1768,210.2 1769,206.9 1770,209.9 1771,212.9 1772,213.4 1773,214.6 1774,209.7 1775,205.6 1776,211.3 1777,210.6 1778,210.0 1779,211.5 1780,208.6 1781,206.3 1782,213.7 1783,214.3 1784,215.1 1785,215.2 1786,214.8 1787,213.4 1788,213.9 1789,211.7 1790,210.0 1791,211.4 1792,204.6 1793,209.0 1794,208.3 1795,211.0 1796,206.1 1797,214.0 1798,211.1 1799,206.6 1800,204.7 1801,208.8 1802,211.3 1803,210.6 1804,212.0 1805,209.1 1806,213.3 1807,211.7 1808,212.4 1809,217.8 1810,221.2 1811,212.6 1812,212.8 1813,208.9 1814,211.5 1815,203.9 1816,206.6 1817,209.5 1818,208.0 1819,208.6 1820,208.6 1821,205.1 1822,205.1 1823,209.6 1824,209.8 1825,209.7 1826,204.9 1827,208.0 1828,212.8 1829,212.5" fill="none" stroke="#ececf4" stroke-width="1.45" stroke-linejoin="round"/>
<rect x="981" y="41" width="848.5" height="228" fill="none" stroke="#9a9a9a" stroke-width="1.6"/>
<path d="M981 41 V269" stroke="#cc4a3c" stroke-width="2"/>
<path d="M1405.3 41 V269" stroke="#e4e450" stroke-width="1.2"/>
<text x="965.5" y="48.1" font-size="20" text-anchor="end">40.0</text>
<text x="965.5" y="93.8" font-size="20" text-anchor="end">20.0</text>
<text x="965.5" y="139.4" font-size="20" text-anchor="end">0.0</text>
<text x="965.5" y="185.0" font-size="20" text-anchor="end">-20.0</text>
<text x="965.5" y="230.7" font-size="20" text-anchor="end">-40.0</text>
<text x="965.5" y="276.4" font-size="20" text-anchor="end">-60.0</text>
<text x="1020.5" y="292.5" font-size="20" text-anchor="middle">188</text>
<text x="1103.5" y="292.5" font-size="20" text-anchor="middle">188.2</text>
<text x="1186.5" y="292.5" font-size="20" text-anchor="middle">188.4</text>
<text x="1269.5" y="292.5" font-size="20" text-anchor="middle">188.6</text>
<text x="1352.5" y="292.5" font-size="20" text-anchor="middle">188.8</text>
<text x="1435.5" y="292.5" font-size="20" text-anchor="middle">189</text>
<text x="1518.5" y="292.5" font-size="20" text-anchor="middle">189.2</text>
<text x="1601.5" y="292.5" font-size="20" text-anchor="middle">189.4</text>
<text x="1684.5" y="292.5" font-size="20" text-anchor="middle">189.6</text>
<text x="1767.5" y="292.5" font-size="20" text-anchor="middle">189.8</text>
<text x="1404.5" y="325" font-size="23.5" text-anchor="middle">Frequency (MHz)</text>
<text transform="translate(885.5,155) rotate(-90)" font-size="23.5" text-anchor="middle">Magnitude (dB)</text>
<path d="M1842.6 -6 H1860.2 L1851.4 9.3 Z" stroke="#dce8f4" stroke-width="1.5" fill="none"/>
<path d="M1873 7.5 L1886 -6" stroke="#d8601c" stroke-width="3.6" stroke-linecap="round" fill="none"/>
<rect x="1359" y="470" width="120.5" height="320" fill="#414141"/>
<path d="M1382.5 470 V790 M1414.5 470 V790 M1447.5 470 V790 M1512.5 470 V790 M1544.5 470 V790 M1577.5 470 V790 M1609.5 470 V790 M1642.5 470 V790 M1674.5 470 V790 M1707.5 470 V790 M1739.5 470 V790 M1772.5 470 V790 M1804.5 470 V790 M1837.5 470 V790 M1359 534.5 H1845 M1359 598.5 H1845 M1359 662.5 H1845 M1359 726.5 H1845" stroke="#909090" stroke-width="1" fill="none"/>
<path d="M1373 470 V790" stroke="#b83028" stroke-width="1.8"/>
<path d="M1479.5 470 V790" stroke="#e8e840" stroke-width="1.2" stroke-dasharray="2 1.5"/>
<g clip-path="url(#c2)"><polyline points="1361.0,746.6 1361.8,762.2 1362.5,759.9 1363.2,749.4 1364.0,775.7 1364.8,749.2 1365.5,743.5 1366.2,766.4 1367.0,776.4 1367.8,764.7 1368.5,739.8 1369.2,739.6 1370.0,757.7 1370.8,759.5 1371.5,761.1 1372.2,745.2 1373.0,770.0 1373.8,749.0 1374.5,752.4 1375.2,739.7 1376.0,750.5 1376.8,770.5 1377.5,757.6 1378.2,757.2 1379.0,778.1 1379.8,771.4 1380.5,787.1 1381.2,796.0 1382.0,756.5 1382.8,790.5 1383.5,763.9 1384.2,777.5 1385.0,749.7 1385.8,758.4 1386.5,757.6 1387.2,750.8 1388.0,761.2 1388.8,783.9 1389.5,761.2 1390.2,754.8 1391.0,762.0 1391.8,756.3 1392.5,785.1 1393.2,758.0 1394.0,731.7 1394.8,777.7 1395.5,777.2 1396.2,726.2 1397.0,750.6 1397.8,736.3 1398.5,743.4 1399.2,788.4 1400.0,739.1 1400.8,756.8 1401.5,773.5 1402.2,750.4 1403.0,754.8 1403.8,753.1 1404.5,784.3 1405.2,732.3 1406.0,764.8 1406.8,748.1 1407.5,795.2 1408.2,784.8 1409.0,752.5 1409.8,750.0 1410.5,774.7 1411.2,751.6 1412.0,774.5 1412.8,773.5 1413.5,775.7 1414.2,783.6 1415.0,791.7 1415.8,762.7 1416.5,747.7 1417.2,753.9 1418.0,733.5 1418.8,769.1 1419.5,760.1 1420.2,779.8 1421.0,764.4 1421.8,750.8 1422.5,761.6 1423.2,781.5 1424.0,783.0 1424.8,775.1 1425.5,785.2 1426.2,789.2 1427.0,762.9 1427.8,790.2 1428.5,780.1 1429.2,758.3 1430.0,796.0 1430.8,756.4 1431.5,785.8 1432.2,792.5 1433.0,771.0 1433.8,774.1 1434.5,771.4 1435.2,744.2 1436.0,763.9 1436.8,796.0 1437.5,771.7 1438.2,757.2 1439.0,759.8 1439.8,782.0 1440.5,773.0 1441.2,775.2 1442.0,787.9 1442.8,765.8 1443.5,775.6 1444.2,767.5 1445.0,762.4 1445.8,775.5 1446.5,742.3 1447.2,759.9 1448.0,766.4 1448.8,762.1 1449.5,742.7 1450.2,780.8 1451.0,751.2 1451.8,784.0 1452.5,756.3 1453.2,787.8 1454.0,769.2 1454.8,776.6 1455.5,771.8 1456.2,750.2 1457.0,748.3 1457.8,764.7 1458.5,776.3 1459.2,750.0 1460.0,784.9 1460.8,792.3 1461.5,766.2 1462.2,766.9 1463.0,761.3 1463.8,765.2 1464.5,727.6 1465.2,780.1 1466.0,772.6 1466.8,777.7 1467.5,748.9 1468.2,778.2 1469.0,787.0 1469.8,766.1 1470.5,773.4 1471.2,757.3 1472.0,796.0 1472.8,749.3 1473.5,757.8 1474.2,769.2 1475.0,774.5 1475.8,756.1 1476.5,766.8 1477.2,755.4 1478.0,693.8 1478.8,598.0 1479.5,598.0 1480.2,598.0 1481.0,699.0 1481.8,728.8 1482.5,736.0 1483.2,766.8 1484.0,743.8 1484.8,723.2 1485.5,736.4 1486.2,739.6 1487.0,759.9 1487.8,752.8 1488.5,746.6 1489.2,766.6 1490.0,788.2 1490.8,730.8 1491.5,766.7 1492.2,731.6 1493.0,758.1 1493.8,772.1 1494.5,777.9 1495.2,741.8 1496.0,763.9 1496.8,785.7 1497.5,754.0 1498.2,760.8 1499.0,771.7 1499.8,772.8 1500.5,772.9 1501.2,760.8 1502.0,769.2 1502.8,782.7 1503.5,746.2 1504.2,741.4 1505.0,764.9 1505.8,761.0 1506.5,745.9 1507.2,773.5 1508.0,755.9 1508.8,743.0 1509.5,765.9 1510.2,796.0 1511.0,783.9 1511.8,774.4 1512.5,762.1 1513.2,795.5 1514.0,790.3 1514.8,754.7 1515.5,731.1 1516.2,748.8 1517.0,762.0 1517.8,742.2 1518.5,743.1 1519.2,745.5 1520.0,785.6 1520.8,734.2 1521.5,788.7 1522.2,765.8 1523.0,796.0 1523.8,754.0 1524.5,762.6 1525.2,748.9 1526.0,764.1 1526.8,782.9 1527.5,760.8 1528.2,788.1 1529.0,729.8 1529.8,795.0 1530.5,749.4 1531.2,779.0 1532.0,771.5 1532.8,768.4 1533.5,746.4 1534.2,757.8 1535.0,757.8 1535.8,786.6 1536.5,746.4 1537.2,763.7 1538.0,765.9 1538.8,737.4 1539.5,745.3 1540.2,759.6 1541.0,749.5 1541.8,784.9 1542.5,765.2 1543.2,759.3 1544.0,770.2 1544.8,774.2 1545.5,763.4 1546.2,784.0 1547.0,763.4 1547.8,744.6 1548.5,752.9 1549.2,757.3 1550.0,772.9 1550.8,733.9 1551.5,760.3 1552.2,780.8 1553.0,730.1 1553.8,729.8 1554.5,759.1 1555.2,750.5 1556.0,754.3 1556.8,759.5 1557.5,748.2 1558.2,773.0 1559.0,771.5 1559.8,776.8 1560.5,751.1 1561.2,758.0 1562.0,759.7 1562.8,741.7 1563.5,767.2 1564.2,761.8 1565.0,751.3 1565.8,731.7 1566.5,731.1 1567.2,745.8 1568.0,755.7 1568.8,747.3 1569.5,747.9 1570.2,744.4 1571.0,761.2 1571.8,788.3 1572.5,749.9 1573.2,767.8 1574.0,759.1 1574.8,772.9 1575.5,755.0 1576.2,785.1 1577.0,763.3 1577.8,747.7 1578.5,763.4 1579.2,764.4 1580.0,739.0 1580.8,724.2 1581.5,761.8 1582.2,762.8 1583.0,776.7 1583.8,753.6 1584.5,743.8 1585.2,754.7 1586.0,767.2 1586.8,751.4 1587.5,759.3 1588.2,766.0 1589.0,779.0 1589.8,752.5 1590.5,759.1 1591.2,740.5 1592.0,771.6 1592.8,757.8 1593.5,751.7 1594.2,769.0 1595.0,766.1 1595.8,765.7 1596.5,754.5 1597.2,737.6 1598.0,753.6 1598.8,792.0 1599.5,781.1 1600.2,765.7 1601.0,754.2 1601.8,761.9 1602.5,755.3 1603.2,778.8 1604.0,729.8 1604.8,771.1 1605.5,795.6 1606.2,766.0 1607.0,738.9 1607.8,784.1 1608.5,757.3 1609.2,759.0 1610.0,742.9 1610.8,761.4 1611.5,753.6 1612.2,761.5 1613.0,758.1 1613.8,782.1 1614.5,785.9 1615.2,761.9 1616.0,765.0 1616.8,762.4 1617.5,745.1 1618.2,788.1 1619.0,763.4 1619.8,744.2 1620.5,784.9 1621.2,778.4 1622.0,796.0 1622.8,750.9 1623.5,753.0 1624.2,789.5 1625.0,741.8 1625.8,768.7 1626.5,764.2 1627.2,751.1 1628.0,747.4 1628.8,778.7 1629.5,756.0 1630.2,761.9 1631.0,739.3 1631.8,775.3 1632.5,740.5 1633.2,796.0 1634.0,751.9 1634.8,739.0 1635.5,751.6 1636.2,742.5 1637.0,746.6 1637.8,790.5 1638.5,774.1 1639.2,744.6 1640.0,759.5 1640.8,768.2 1641.5,745.0 1642.2,759.7 1643.0,796.0 1643.8,788.1 1644.5,764.9 1645.2,774.2 1646.0,784.6 1646.8,770.3 1647.5,772.9 1648.2,765.8 1649.0,767.8 1649.8,772.8 1650.5,773.8 1651.2,765.5 1652.0,769.1 1652.8,766.5 1653.5,767.8 1654.2,782.1 1655.0,763.4 1655.8,786.7 1656.5,759.9 1657.2,744.1 1658.0,772.1 1658.8,769.0 1659.5,738.1 1660.2,769.2 1661.0,788.6 1661.8,761.8 1662.5,784.9 1663.2,758.0 1664.0,791.7 1664.8,767.7 1665.5,765.3 1666.2,753.5 1667.0,764.8 1667.8,791.1 1668.5,766.8 1669.2,770.1 1670.0,749.3 1670.8,778.7 1671.5,775.8 1672.2,763.9 1673.0,775.8 1673.8,791.5 1674.5,785.3 1675.2,768.4 1676.0,771.1 1676.8,787.0 1677.5,771.7 1678.2,767.3 1679.0,796.0 1679.8,796.0 1680.5,796.0 1681.2,796.0 1682.0,765.4 1682.8,767.0 1683.5,796.0 1684.2,756.7 1685.0,751.9 1685.8,765.2 1686.5,759.7 1687.2,759.5 1688.0,776.1 1688.8,742.5 1689.5,781.3 1690.2,771.6 1691.0,796.0 1691.8,753.3 1692.5,776.7 1693.2,740.8 1694.0,796.0 1694.8,741.8 1695.5,796.0 1696.2,769.6 1697.0,767.1 1697.8,775.1 1698.5,745.9 1699.2,784.9 1700.0,773.1 1700.8,766.5 1701.5,768.5 1702.2,773.4 1703.0,762.6 1703.8,773.5 1704.5,749.1 1705.2,784.0 1706.0,770.4 1706.8,761.4 1707.5,759.9 1708.2,747.9 1709.0,778.2 1709.8,753.6 1710.5,768.9 1711.2,796.0 1712.0,754.3 1712.8,791.4 1713.5,775.3 1714.2,757.9 1715.0,775.4 1715.8,782.1 1716.5,757.2 1717.2,750.5 1718.0,775.5 1718.8,771.3 1719.5,758.7 1720.2,763.5 1721.0,768.4 1721.8,737.8 1722.5,767.9 1723.2,778.2 1724.0,768.8 1724.8,756.0 1725.5,775.2 1726.2,779.8 1727.0,792.7 1727.8,734.1 1728.5,754.7 1729.2,785.0 1730.0,755.8 1730.8,756.4 1731.5,745.0 1732.2,780.4 1733.0,746.7 1733.8,752.3 1734.5,786.3 1735.2,762.3 1736.0,761.3 1736.8,760.2 1737.5,796.0 1738.2,761.1 1739.0,772.3 1739.8,753.8 1740.5,763.7 1741.2,778.4 1742.0,786.3 1742.8,773.9 1743.5,764.4 1744.2,768.7 1745.0,794.7 1745.8,745.5 1746.5,755.7 1747.2,767.2 1748.0,764.7 1748.8,759.2 1749.5,763.7 1750.2,771.0 1751.0,750.9 1751.8,769.2 1752.5,771.0 1753.2,764.3 1754.0,766.9 1754.8,762.5 1755.5,722.9 1756.2,774.1 1757.0,757.2 1757.8,751.4 1758.5,792.1 1759.2,767.9 1760.0,793.1 1760.8,777.5 1761.5,793.6 1762.2,763.3 1763.0,777.5 1763.8,751.7 1764.5,771.3 1765.2,772.2 1766.0,775.4 1766.8,779.8 1767.5,750.0 1768.2,790.5 1769.0,748.4 1769.8,770.0 1770.5,789.6 1771.2,764.2 1772.0,776.8 1772.8,776.5 1773.5,746.0 1774.2,755.8 1775.0,796.0 1775.8,770.3 1776.5,769.9 1777.2,774.5 1778.0,743.1 1778.8,780.0 1779.5,779.6 1780.2,761.4 1781.0,747.1 1781.8,791.2 1782.5,767.1 1783.2,769.3 1784.0,755.9 1784.8,735.1 1785.5,753.7 1786.2,773.8 1787.0,779.9 1787.8,796.0 1788.5,764.7 1789.2,753.3 1790.0,756.5 1790.8,776.5 1791.5,744.1 1792.2,789.2 1793.0,750.8 1793.8,759.8 1794.5,777.8 1795.2,751.6 1796.0,787.4 1796.8,784.8 1797.5,763.9 1798.2,742.1 1799.0,754.4 1799.8,778.3 1800.5,742.4 1801.2,734.0 1802.0,763.1 1802.8,765.0 1803.5,785.0 1804.2,785.6 1805.0,793.8 1805.8,784.6 1806.5,796.0 1807.2,770.6 1808.0,779.0 1808.8,771.6 1809.5,758.5 1810.2,784.7 1811.0,776.8 1811.8,762.5 1812.5,729.8 1813.2,749.6 1814.0,796.0 1814.8,752.1 1815.5,753.0 1816.2,765.2 1817.0,796.0 1817.8,776.3 1818.5,755.6 1819.2,734.9 1820.0,744.7 1820.8,765.6 1821.5,766.3 1822.2,752.0 1823.0,753.8 1823.8,741.3 1824.5,796.0 1825.2,763.3 1826.0,767.8 1826.8,774.3 1827.5,771.8 1828.2,777.7 1829.0,780.4 1829.8,796.0 1830.5,776.3 1831.2,757.1 1832.0,747.7 1832.8,767.0 1833.5,740.3 1834.2,744.6 1835.0,796.0 1835.8,764.8 1836.5,766.8 1837.2,758.6 1838.0,749.9 1838.8,774.9 1839.5,751.7 1840.2,796.0 1841.0,758.2 1841.8,791.0 1842.5,790.4 1843.2,753.8" fill="none" stroke="#ececec" stroke-width="1.15" stroke-linejoin="round"/><path d="M1479.5 598 V745" stroke="#ffffb0" stroke-width="1.6"/></g>
<rect x="1359" y="470" width="486" height="320" fill="none" stroke="#9a9a9a" stroke-width="1.6"/>
<circle cx="1479.5" cy="596" r="6" fill="#ffee00"/>
<text x="1348.5" y="477.4" font-size="19.6" text-anchor="end">-10.0</text>
<text x="1348.5" y="541.4" font-size="19.6" text-anchor="end">-20.0</text>
<text x="1348.5" y="605.4" font-size="19.6" text-anchor="end">-30.0</text>
<text x="1348.5" y="669.4" font-size="19.6" text-anchor="end">-40.0</text>
<text x="1348.5" y="733.4" font-size="19.6" text-anchor="end">-50.0</text>
<text x="1348.5" y="797.4" font-size="19.6" text-anchor="end">-60.0</text>
<text x="1382.0" y="810.3" font-size="14.7" text-anchor="middle">-60</text>
<text x="1414.5" y="833.3" font-size="14.7" text-anchor="middle">-40</text>
<text x="1447.0" y="810.3" font-size="14.7" text-anchor="middle">-20</text>
<text x="1479.5" y="833.3" font-size="14.7" text-anchor="middle">0</text>
<text x="1512.0" y="810.3" font-size="14.7" text-anchor="middle">20</text>
<text x="1544.5" y="833.3" font-size="14.7" text-anchor="middle">40</text>
<text x="1577.0" y="810.3" font-size="14.7" text-anchor="middle">60</text>
<text x="1609.5" y="833.3" font-size="14.7" text-anchor="middle">80</text>
<text x="1642.0" y="810.3" font-size="14.7" text-anchor="middle">100</text>
<text x="1674.5" y="833.3" font-size="14.7" text-anchor="middle">120</text>
<text x="1707.0" y="810.3" font-size="14.7" text-anchor="middle">140</text>
<text x="1739.5" y="833.3" font-size="14.7" text-anchor="middle">160</text>
<text x="1772.0" y="810.3" font-size="14.7" text-anchor="middle">180</text>
<text x="1804.5" y="833.3" font-size="14.7" text-anchor="middle">200</text>
<text x="1837.0" y="810.3" font-size="14.7" text-anchor="middle">220</text>
<text x="1601.5" y="864" font-size="20" text-anchor="middle">Distance Difference (km)</text>
<text transform="translate(1278,630) rotate(-90)" font-size="19.8" text-anchor="middle">Magnitude (dB)</text>
<path d="M1842.6 420 H1860.2 L1851.4 435.3 Z" stroke="#dce8f4" stroke-width="1.5" fill="none"/>
<path d="M1872.5 421.5 L1886 435 M1886 421.5 L1872.5 435" stroke="#e8601c" stroke-width="3.6" stroke-linecap="round" fill="none"/>
</svg>
</body></html>
